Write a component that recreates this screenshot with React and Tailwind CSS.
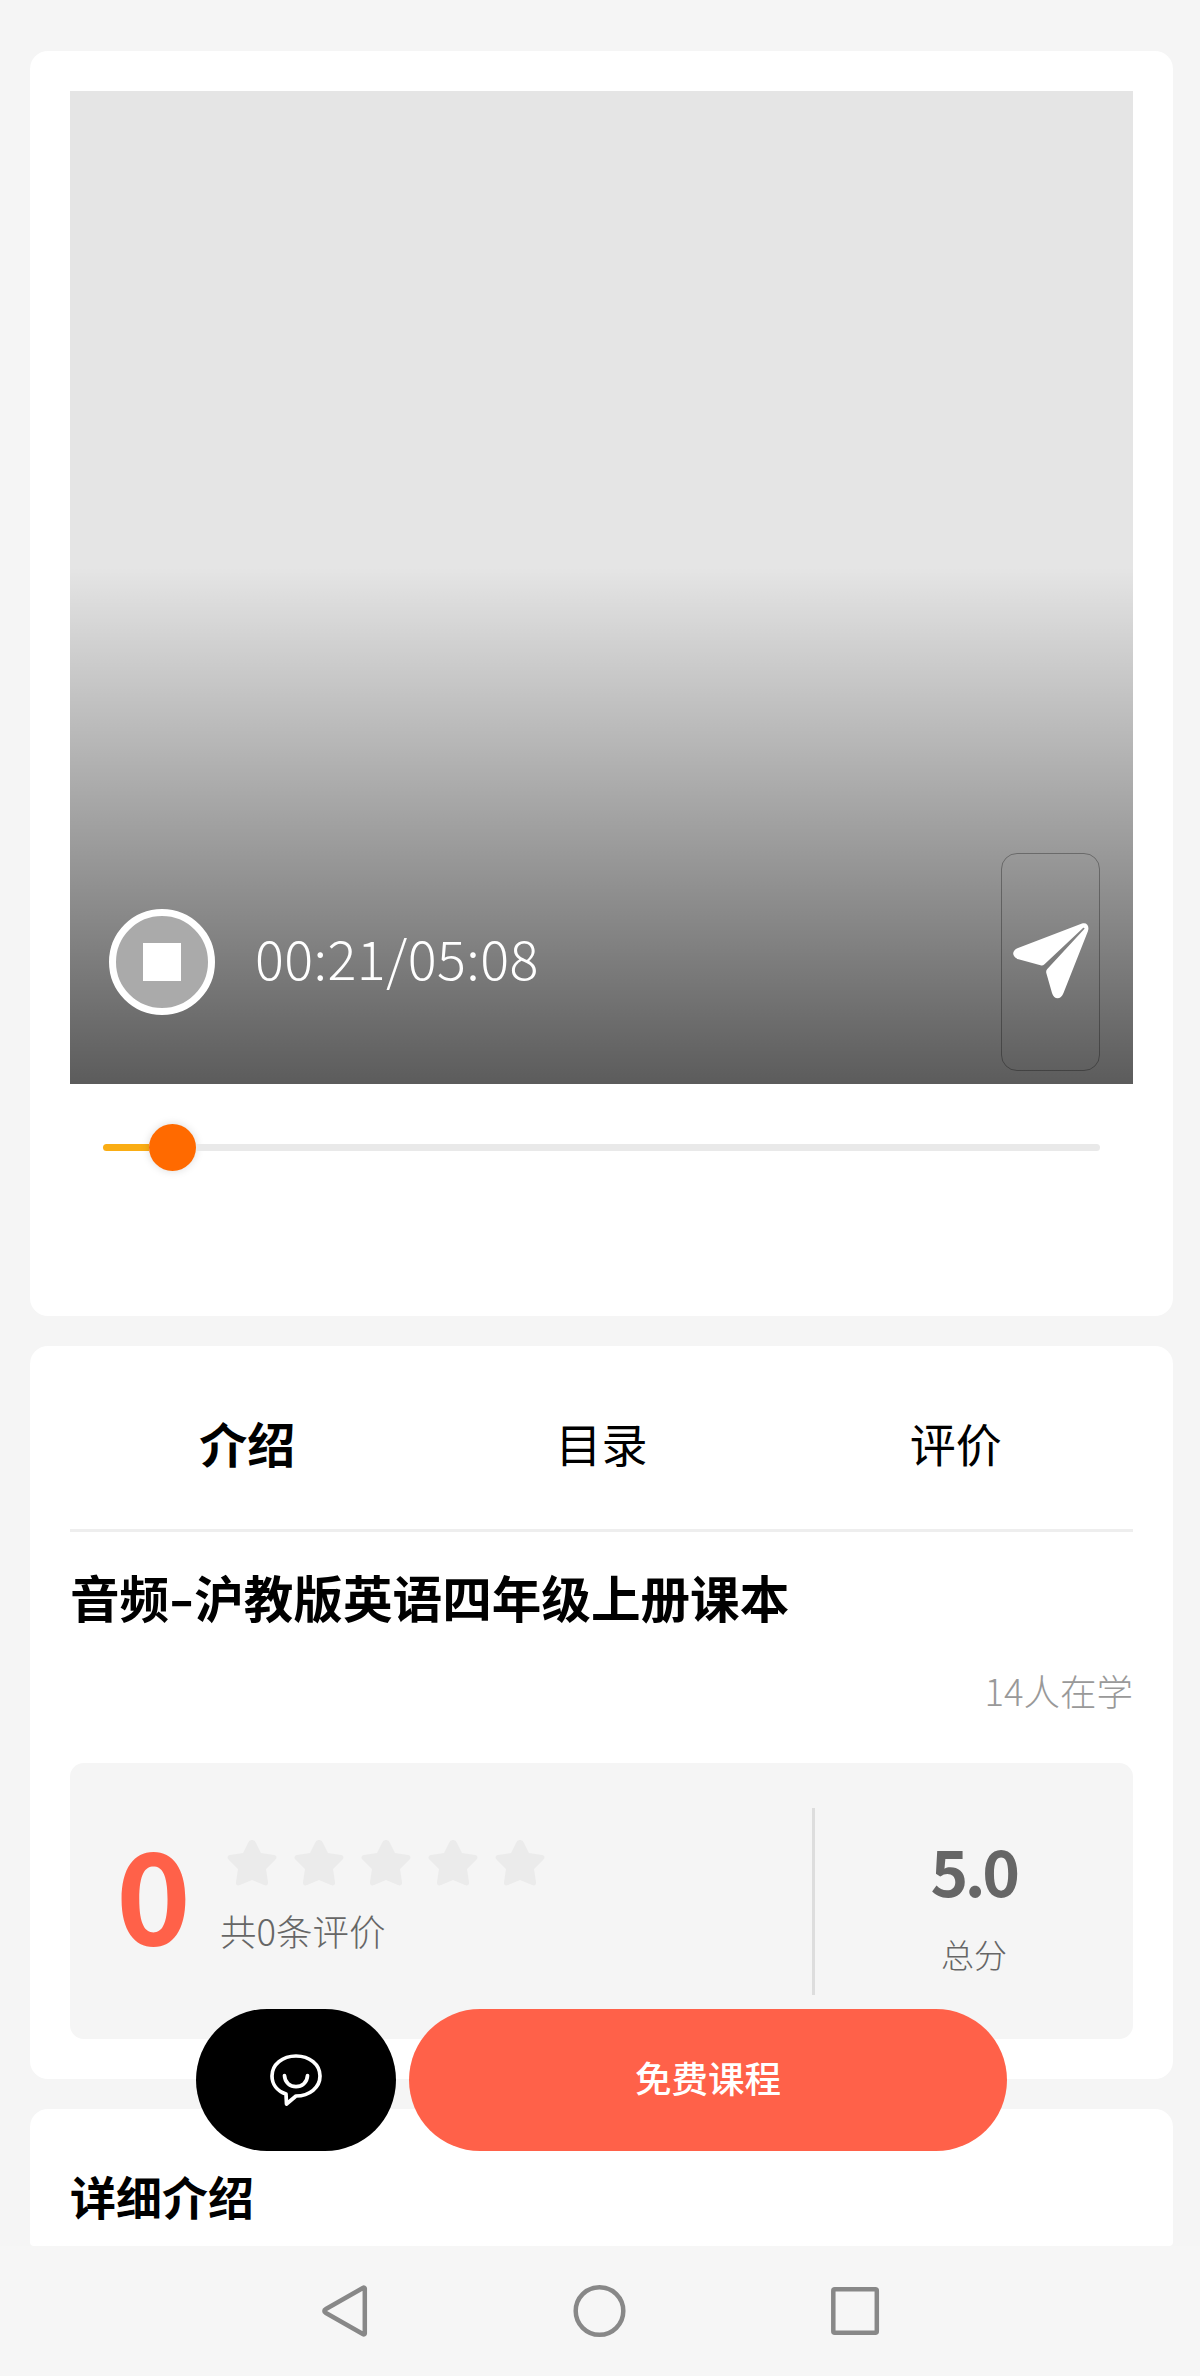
import React from 'react';

const TABS = [
  { label: '介绍', active: true },
  { label: '目录', active: false },
  { label: '评价', active: false },
];

const Star = () => (
  <svg viewBox="0 0 50 48" className="h-[48px] w-[50px] fill-[#ebebeb]">
    <path d="M25 1c2 0 3 1 4 3l5 10 13 2c3 .5 3 3 1.500 4.500L39 30l2 13c.3 3-1.500 4-4 3l-12-5-12 5c-2.500 1-4.300 0-4-3l2-13-9.500-9.500C0 19 0 16.500 3 16l13-2 5-10c1-2 2-3 4-3z" />
  </svg>
);

const PlaneIcon = () => (
  <svg viewBox="0 0 76 76" className="h-[76px] w-[76px] fill-white">
    <path d="M69 .6C74-.8 76.500 3 75 8L50.500 70c-2.500 7-9.500 7-11.500 0L33.300 50c-.4-1.600 0-2.800 1-3.900L71.300 6c.7-1.100-.5-1.700-1.300-.9L31.500 41.300c-1.300 1.100-2.500 1.400-4 1L5.500 36.300C-1.500 34-1.500 27.500 5 25z" />
  </svg>
);

const SmileChatIcon = () => (
  <svg viewBox="0 0 54 54" className="h-[54px] w-[54px] fill-none stroke-white stroke-[3.700] [stroke-linecap:round] [stroke-linejoin:round]">
    <path d="M17 41C8 38 3 31 3 23 3 11.500 13.500 3 27 3s24 8.500 24 20-10.500 20-24 20L17.500 51z" />
    <path d="M15.500 22.500c.5 14.800 22.500 14.800 23 0" />
  </svg>
);

/* Cover area with the play controls over it */
const Player = () => (
  <section className="h-[1265px] rounded-[18px] bg-white px-10 pt-[40px]">
    <div className="flex h-[993px] flex-col justify-end bg-[#e5e5e5]">
      <div className="flex h-[517px] items-end justify-between bg-linear-to-b from-black/0 to-black/60 pr-[33px] pb-[13px] pl-[39px]">
        <div className="mb-[56px] flex items-center gap-[40px]">
          <div className="flex h-[106px] w-[106px] items-center justify-center rounded-full border-[7px] border-white bg-[#aaaaaa]">
            <div className="h-[38px] w-[38px] bg-white" />
          </div>
          <span className="pb-[10px] text-[54px] leading-none font-light tracking-[0.4px] text-white">00:21/05:08</span>
        </div>
        <div className="flex h-[218px] w-[99px] items-center justify-center rounded-[16px] border border-black/30 pb-[3px]">
          <PlaneIcon />
        </div>
      </div>
    </div>

    {/* Progress bar */}
    <div className="mt-[40px] flex h-[47px] items-center px-[33px]">
      <div className="h-[7px] w-[46px] rounded-l-full bg-[#faad14]" />
      <div className="h-[47px] w-[47px] rounded-full bg-[#ff6a00] shadow-[0_0_8px_rgba(0,0,0,0.15)]" />
      <div className="h-[7px] flex-1 rounded-r-full bg-[#e9e9e9]" />
    </div>
  </section>
);

const Rating = () => (
  <div className="flex h-[276px] items-center rounded-[14px] bg-[#f5f5f5]">
    <div className="flex flex-1 items-center pl-[46px]">
      <span className="w-[74px] pb-[22px] text-[127px] leading-none font-bold text-[#ff6149]">0</span>
      <div className="ml-[30px] pb-[12px]">
        <div className="flex gap-[17px] pl-[7px]">
          {[1, 2, 3, 4, 5].map((n) => (
            <Star key={n} />
          ))}
        </div>
        <p className="mt-[23px] text-[36.500px] leading-[42px] font-light text-[#666]">共0条评价</p>
      </div>
    </div>
    <div className="h-[187px] w-[3px] bg-[#dddddd]" />
    <div className="flex w-[318px] flex-col items-center pt-[5px] text-[#666]">
      <span className="pr-[1px] text-[64px] leading-[72px] font-bold tracking-[-3.500px]">5.0</span>
      <span className="mt-[29px] text-[33px] leading-[40px] font-light">总分</span>
    </div>
  </div>
);

const Intro = () => (
  <section className="mt-[30px] h-[733px] rounded-[18px] bg-white px-10">
    <div className="grid h-[186px] grid-cols-3 items-center border-b-[3px] border-[#eeeeee] text-center text-black">
      {TABS.map((tab) => (
        <span key={tab.label} className={tab.active ? 'mt-[8px] text-[48px] leading-[60px] font-bold' : 'mt-[8px] text-[46px] leading-[60px]'}>
          {tab.label}
        </span>
      ))}
    </div>
    <h1 className="mt-[28px] text-[49.600px] leading-[72px] font-bold text-black">
      音频<span className="inline-block w-[25px] scale-x-[1.4] text-center">-</span>沪教版英语四年级上册课本
    </h1>
    <p className="mt-[34px] text-right text-[36.500px] leading-[50px] font-light text-[#999]">14人在学</p>
    <div className="mt-[47px]">
      <Rating />
    </div>
  </section>
);

const NavBar = () => (
  <nav className="flex h-[130px] items-center bg-[#f6f6f6] pl-[320px]">
    <svg viewBox="0 0 560 56" className="h-[56px] w-[560px] fill-none stroke-[#888888] stroke-[4.500] [stroke-linejoin:round]">
      <path d="M44.800 5.500v45a1 1 0 0 1-1.500.8L5.500 29.800a2 2 0 0 1 0-3.600L43.300 4.700a1 1 0 0 1 1.500.8z" />
      <circle cx="279.500" cy="28" r="23.800" />
      <rect x="513.300" y="6.300" width="43.500" height="43.500" rx="1.500" />
    </svg>
  </nav>
);

export default function App() {
  return (
    <div className="relative flex h-[2376px] w-[1200px] flex-col overflow-hidden bg-[#f5f5f5] font-['Noto_Sans_CJK_SC',sans-serif]">
      <main className="flex-1 pt-[51px] pr-[27px] pl-[30px]">
        <Player />
        <Intro />
        <section className="mt-[30px] h-[137px] rounded-t-[18px] rounded-b-[4px] bg-white px-10 pt-[54px]">
          <h2 className="text-[46px] leading-[64px] font-bold text-black">详细介绍</h2>
        </section>
      </main>

      {/* Floating actions over the cards */}
      <div className="absolute top-[2009px] left-[196px] flex gap-[13px]">
        <button className="flex h-[142px] w-[200px] items-center justify-center rounded-full bg-black">
          <SmileChatIcon />
        </button>
        <button className="h-[142px] w-[598px] rounded-full bg-[#ff6149] pb-[4px] text-[36.500px] font-medium text-white">免费课程</button>
      </div>

      <NavBar />
    </div>
  );
}
